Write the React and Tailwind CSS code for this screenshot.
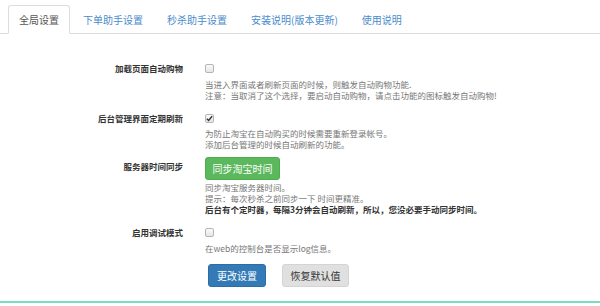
import React from "react";

const tabs = ["全局设置", "下单助手设置", "秒杀助手设置", "安装说明(版本更新)", "使用说明"];

function Check({ checked }) {
  return (
    <div className="h-[12px] flex items-center">
      <div className="w-[9px] h-[9px] rounded-[2px] border border-[#b5b5b5] bg-gradient-to-b from-[#fafafa] to-[#e6e6e6] flex items-center justify-center">
        {checked && (
          <svg width="7" height="7" viewBox="0 0 8 8">
            <path d="M1 4.2 L3 6.2 L7 1.5" fill="none" stroke="#333" strokeWidth="1.6" />
          </svg>
        )}
      </div>
    </div>
  );
}

function Label({ children, className = "" }) {
  return (
    <div className={"text-right font-bold text-[8.5px] leading-[12px] text-[#333] " + className}>
      {children}
    </div>
  );
}

export default function App() {
  return (
    <div
      className="w-[600px] h-[306px] bg-white relative overflow-hidden"
      style={{ fontFamily: '"Noto Sans CJK SC", "Noto Sans", sans-serif' }}
    >
      {/* tabs */}
      <div className="pt-[5px] pl-[8px] flex border-b border-[#ddd] h-[34px]">
        {tabs.map((t, i) => (
          <div
            key={t}
            className={
              "h-[29px] px-[10px] mr-[2px] flex items-center text-[10px] rounded-t-[3px] " +
              (i === 0
                ? "bg-white border border-[#ddd] border-b-white text-[#555]"
                : "text-[#4a8ccc] border border-transparent")
            }
          >
            {t}
          </div>
        ))}
      </div>

      <div className="grid grid-cols-[183px_1fr] gap-x-[22px] text-[8.5px]">
        {/* row 1 */}
        <Label className="mt-[28px]">加载页面自动购物</Label>
        <div className="mt-[28px]">
          <Check />
          <div className="mt-[5px] leading-[11px] text-[#777]">
            <div>当进入界面或者刷新页面的时候，则触发自动购物功能.</div>
            <div>注意：当取消了这个选择，要启动自动购物，请点击功能的图标触发自动购物!</div>
          </div>
        </div>

        {/* row 2 */}
        <Label className="mt-[11px]">后台管理界面定期刷新</Label>
        <div className="mt-[11px]">
          <Check checked />
          <div className="mt-[4px] leading-[11px] text-[#777]">
            <div>为防止淘宝在自动购买的时候需要重新登录帐号。</div>
            <div>添加后台管理的时候自动刷新的功能。</div>
          </div>
        </div>

        {/* row 3 */}
        <Label className="mt-[10px]">服务器时间同步</Label>
        <div className="mt-[7px]">
          <div className="w-[75px] h-[23px] rounded-[3px] bg-[#5cb85c] border border-[#4cae4c] text-white text-[10px] flex items-center justify-center">
            同步淘宝时间
          </div>
          <div className="mt-[2px] leading-[11px] text-[#777]">
            <div>同步淘宝服务器时间。</div>
            <div>提示：每次秒杀之前同步一下 时间更精准。</div>
            <div className="font-bold text-[#333]">后台有个定时器，每隔3分钟会自动刷新，所以，您没必要手动同步时间。</div>
          </div>
        </div>

        {/* row 4 */}
        <Label className="mt-[11px]">启用调试模式</Label>
        <div className="mt-[11px]">
          <Check />
          <div className="mt-[5px] leading-[11px] text-[#777]">
            <div>在web的控制台是否显示log信息。</div>
          </div>
          <div className="mt-[10px] ml-[3px] flex gap-[16px]">
            <div className="w-[58px] h-[23px] rounded-[3px] bg-[#337ab7] border border-[#2e6da4] text-white text-[10px] flex items-center justify-center">
              更改设置
            </div>
            <div className="w-[67px] h-[23px] rounded-[3px] bg-[#e0e0e0] border border-[#d4d4d4] text-[#333] text-[10px] flex items-center justify-center">
              恢复默认值
            </div>
          </div>
        </div>
      </div>

      <div className="absolute left-0 right-0 top-[301px] h-[2px] bg-[#76dfc3]" />
    </div>
  );
}
